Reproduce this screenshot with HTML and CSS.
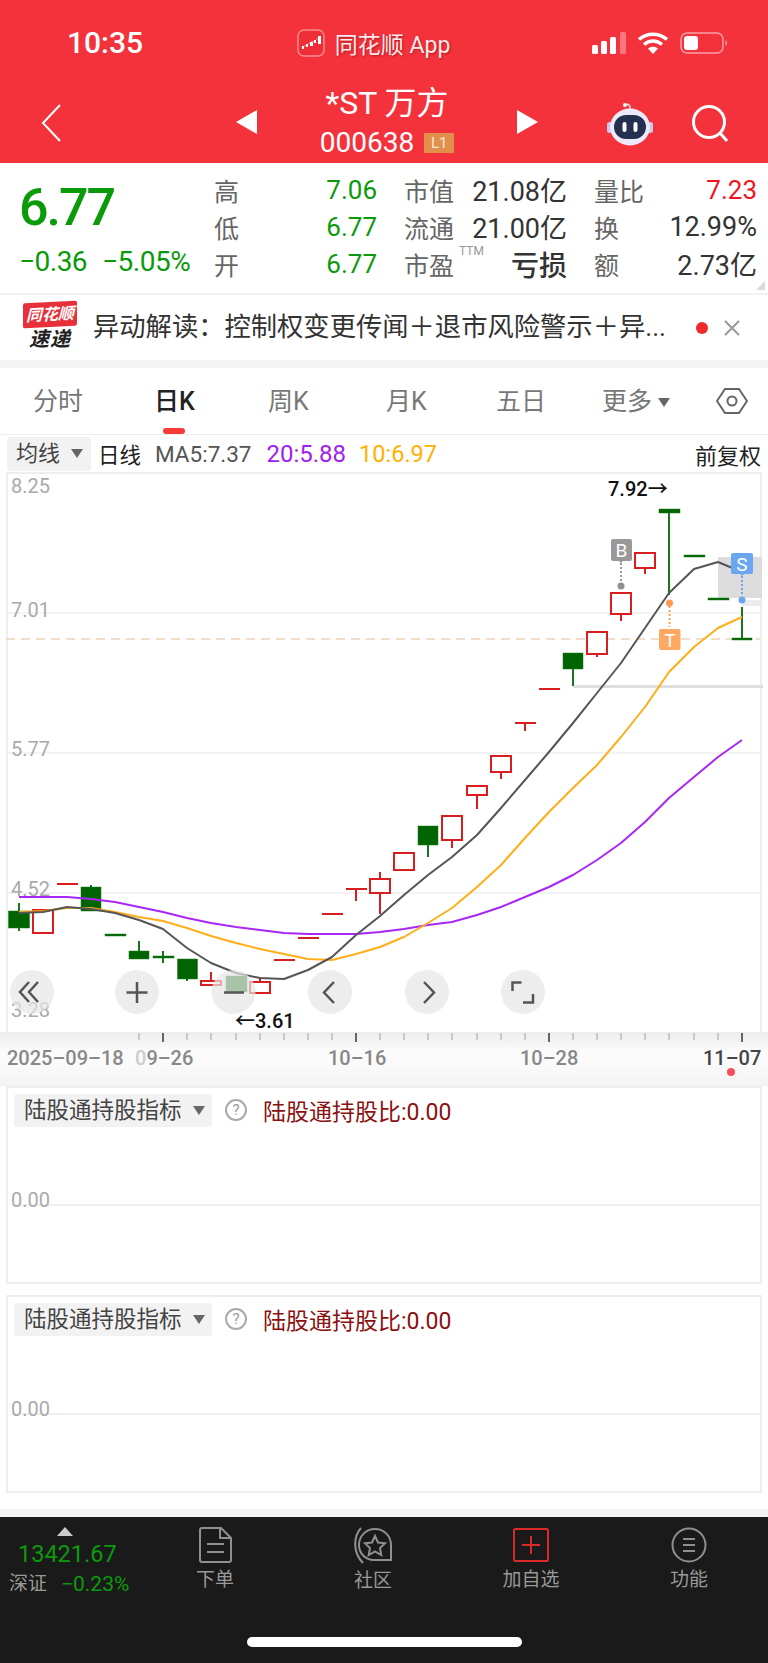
FILE: index.html
```html
<!DOCTYPE html>
<html lang="zh-CN">
<head>
    <meta charset="UTF-8">
    <meta name="viewport" content="width=device-width, initial-scale=1.0">
    <title>*ST万方</title>
    <link rel="stylesheet" href="styles.css">
</head>
<body>
<div id="page">
    <!-- 顶部红色区域 -->
    <header id="header">
        <div class="statusbar">
            <span class="time">10:35</span>
            <div class="app-name">
                <svg class="app-icon" width="28" height="28" viewBox="0 0 28 28">
                    <rect x="1" y="1" width="26" height="26" rx="6" fill="#ee2f38" stroke="#f98a8f" stroke-width="1.5"/>
                    <path d="M5 18l5-2 4-3 4-1 5-5" fill="none" stroke="#f98a8f" stroke-width="1"/>
                    <rect x="5" y="17" width="2" height="3" fill="#fff"/>
                    <rect x="9" y="15" width="2" height="3" fill="#fff"/>
                    <rect x="13" y="13" width="3" height="4" fill="#fff"/>
                    <rect x="17" y="11" width="2" height="3" fill="#fff"/>
                    <rect x="21" y="7" width="3" height="8" fill="#fff"/>
                </svg>
                <span>同花顺 App</span>
            </div>
            <div class="status-icons">
                <svg width="34" height="22" viewBox="0 0 34 22">
                    <rect x="0" y="13" width="6" height="9" rx="1.5" fill="#fff"/>
                    <rect x="9" y="9" width="6" height="13" rx="1.5" fill="#fff"/>
                    <rect x="18" y="5" width="6" height="17" rx="1.5" fill="#fff"/>
                    <rect x="28" y="0" width="6" height="22" rx="1.5" fill="#f9777e"/>
                </svg>
                <svg width="30" height="22" viewBox="0 0 30 22">
                    <path d="M1 7.5C9 .5 21 .5 29 7.5" fill="none" stroke="#fff" stroke-width="3.4"/>
                    <path d="M6 12.5c5.5-4.6 12.5-4.6 18 0" fill="none" stroke="#fff" stroke-width="3.4"/>
                    <path d="M10 16.5c3-2.5 7-2.5 10 0L15 22z" fill="#fff"/>
                </svg>
                <svg width="48" height="22" viewBox="0 0 48 22">
                    <rect x="1" y="1" width="42" height="20" rx="6" fill="none" stroke="#f9a0a5" stroke-width="1.5"/>
                    <rect x="4" y="4" width="14" height="14" rx="3" fill="#fff"/>
                    <path d="M45.5 8c2 .8 2 5.2 0 6z" fill="#f9a0a5"/>
                </svg>
            </div>
        </div>
        <div class="navbar">
            <svg class="nav-back" width="20" height="38" viewBox="0 0 20 38">
                <path d="M19 1L2 19l17 18" fill="none" stroke="#fff" stroke-width="2"/>
            </svg>
            <div class="arrow arrow-left"></div>
            <div class="stock">
                <div class="stock-name">*ST 万方</div>
                <div class="stock-code">000638<span class="badge">L1</span></div>
            </div>
            <div class="arrow arrow-right"></div>
            <svg class="robot" width="46" height="44" viewBox="0 0 46 44">
                <path d="M23 9V5c0-2-2-3-4-2.5" fill="none" stroke="#e6e6f5" stroke-width="1.5"/>
                <circle cx="18" cy="3" r="2" fill="#f2f0fa"/>
                <rect x="0" y="20" width="5" height="11" rx="2.5" fill="#cfc8ee"/>
                <rect x="41" y="20" width="5" height="11" rx="2.5" fill="#cfc8ee"/>
                <ellipse cx="23" cy="25" rx="20" ry="18.5" fill="#eceaf8"/>
                <rect x="7" y="13" width="32" height="24" rx="12" fill="#24304f"/>
                <rect x="15.5" y="20" width="4" height="10" rx="2" fill="#fff"/>
                <rect x="26.5" y="20" width="4" height="10" rx="2" fill="#fff"/>
            </svg>
            <svg class="search" width="38" height="38" viewBox="0 0 38 38">
                <circle cx="18" cy="17" r="15.5" fill="none" stroke="#fff" stroke-width="3"/>
                <path d="M29 28l7 8" stroke="#fff" stroke-width="3"/>
            </svg>
        </div>
    </header>

    <!-- 行情数据 -->
    <section id="quote">
        <div class="price-box">
            <div class="price">6.77</div>
            <div class="change"><span>−0.36</span><span>−5.05%</span></div>
        </div>
        <div class="quote-grid">
            <div class="cell"><span class="lab">高</span><span class="green">7.06</span></div>
            <div class="cell"><span class="lab">市值</span><span class="dark">21.08亿</span></div>
            <div class="cell"><span class="lab">量比</span><span class="red">7.23</span></div>
            <div class="cell"><span class="lab">低</span><span class="green">6.77</span></div>
            <div class="cell"><span class="lab">流通</span><span class="dark">21.00亿</span></div>
            <div class="cell"><span class="lab">换</span><span class="dark">12.99%</span></div>
            <div class="cell"><span class="lab">开</span><span class="green">6.77</span></div>
            <div class="cell"><span class="lab">市盈</span><sup class="ttm">TTM</sup><span class="dark loss">亏损</span></div>
            <div class="cell"><span class="lab">额</span><span class="dark">2.73亿</span></div>
        </div>
        <div class="corner"></div>
    </section>

    <!-- 速递 -->
    <section id="news">
        <div class="news-logo">
            <div class="news-logo-top">同花顺</div>
            <div class="news-logo-bottom">速递</div>
        </div>
        <div class="news-text">异动解读：控制权变更传闻＋退市风险警示＋异...</div>
        <div class="news-dot"></div>
        <svg class="news-close" width="16" height="16" viewBox="0 0 16 16">
            <path d="M1 1l14 14M15 1L1 15" stroke="#999" stroke-width="2"/>
        </svg>
    </section>

    <!-- 周期切换 -->
    <nav id="tabs">
        <div class="tab">分时</div>
        <div class="tab tab-on">日K</div>
        <div class="tab">周K</div>
        <div class="tab">月K</div>
        <div class="tab">五日</div>
        <div class="tab">更多<i class="caret"></i></div>
        <svg class="hex" width="32" height="26" viewBox="0 0 32 26">
            <path d="M9 1h14l8 12-8 12H9L1 13z" fill="none" stroke="#666" stroke-width="2"/>
            <circle cx="16" cy="13" r="4.5" fill="none" stroke="#666" stroke-width="2"/>
        </svg>
    </nav>

    <div id="toolbar">
        <div class="select">均线<i class="caret"></i></div>
        <span class="tb-day">日线</span>
        <span class="tb-ma5">MA5:7.37</span>
        <span class="tb-ma20">20:5.88</span>
        <span class="tb-ma10">10:6.97</span>
        <span class="tb-fq">前复权</span>
    </div>

    <!-- K线图 -->
    <div id="chart">
        <svg width="752" height="558" viewBox="8 474 752 558">
            <g class="grid">
                <path d="M6 613H762M6 753H762M6 893H762"/>
            </g>
            <path d="M6 639H760" stroke="#edd3b8" stroke-width="1.5" stroke-dasharray="9 6"/>
            <rect x="718" y="557" width="44" height="41" fill="#dcdcdc"/>
            <rect x="742" y="600" width="20" height="6" fill="#ececec"/>
            <rect x="573" y="685" width="190" height="3" fill="#dedede"/>

            <g class="axis-y">
                <text x="11" y="493">8.25</text>
                <text x="11" y="617">7.01</text>
                <text x="11" y="756">5.77</text>
                <text x="11" y="896">4.52</text>
                <text x="11" y="1017">3.28</text>
            </g>

            <g class="down">
                <path class="wick" d="M19 903V931M91 885V888M139 941V952M163 951V963M187 978V981M428 845V857M573 668V686M669 512V595M742 607V639"/>
                <rect x="8.5" y="911" width="21" height="17"/>
                <rect x="81" y="887" width="20" height="24"/>
                <rect x="129" y="951" width="20" height="8"/>
                <rect x="177.5" y="959" width="20" height="20"/>
                <rect x="418" y="826" width="20" height="19"/>
                <rect x="563" y="653" width="20" height="16"/>
                <rect x="105" y="934" width="21" height="2"/>
                <rect x="153" y="956" width="21" height="2"/>
                <rect x="226" y="976" width="21" height="16" opacity=".9"/>
                <rect x="659" y="509" width="21" height="4"/>
                <rect x="684" y="555" width="21" height="2"/>
                <rect x="708" y="598" width="21" height="2"/>
                <rect x="732" y="638" width="20" height="2"/>
            </g>

            <g class="up">
                <path class="wick" d="M211 972V981M260 977V982M356 889V901M380 872V879M380 893V914M452 840V848M477 795V809M501 772V779M525 723V731M597 654V657M621 614V621M645 568V574"/>
                <rect x="33" y="910" width="20" height="23"/>
                <rect x="201" y="981" width="20" height="4"/>
                <rect x="250" y="982" width="20" height="11"/>
                <rect x="370" y="879" width="20" height="14"/>
                <rect x="394" y="853" width="20" height="17"/>
                <rect x="442" y="816" width="20" height="24"/>
                <rect x="467" y="786" width="20" height="9"/>
                <rect x="491" y="756" width="20" height="16"/>
                <rect x="587" y="632" width="20" height="22"/>
                <rect x="611" y="593" width="20" height="21"/>
                <rect x="635" y="553" width="20" height="15"/>
                <path class="flat" d="M57 884H78M274 960H295M298 938H319M322 914H343M346 889H367M515 723H536M539 689H560"/>
            </g>

            <polyline class="ma20" points="19,897 43,897 67,897 91,899 115,902 139,907 163,912 187,918 211,923 236,927 260,930 284,933 308,934 332,934 356,934 380,932 404,929 428,925 452,922 477,915 501,907 525,897 549,887 573,875 597,860 621,843 645,822 669,798 694,777 718,757 742,740"/>
            <polyline class="ma10" points="19,912 43,911 67,908 91,908 115,912 139,917 163,921 187,928 211,936 236,943 260,949 284,954 308,959 332,960 356,954 380,947 404,937 428,923 452,908 477,887 501,865 525,838 549,812 573,788 597,765 621,737 645,707 669,672 694,647 718,628 742,617"/>
            <polyline class="ma5" points="19,913 43,912 67,907 91,909 115,913 139,920 163,929 187,948 211,963 236,973 260,978 284,979 308,970 332,957 356,935 380,916 404,895 428,875 452,857 477,835 501,808 525,780 549,752 573,723 597,693 621,663 645,628 669,593 694,569 718,562 742,572"/>

            <!-- 买卖点 -->
            <path d="M621 563V582" stroke="#999" stroke-width="2" stroke-dasharray="2 2"/>
            <circle cx="621" cy="586" r="3.5" fill="#8f8f8f"/>
            <rect x="611" y="539" width="21" height="22" rx="2" fill="#999"/>
            <path d="M618 560h6l-3 3z" fill="#999"/>
            <text class="mark" x="621.5" y="557">B</text>

            <path d="M669.5 606V627" stroke="#ffa15c" stroke-width="2" stroke-dasharray="2 2"/>
            <circle cx="669.5" cy="603" r="3.5" fill="#ff9a50"/>
            <rect x="659" y="629" width="21.5" height="21" rx="2" fill="#ffa862"/>
            <text class="mark" x="669.8" y="647">T</text>

            <path d="M742 576V596" stroke="#6aa5ee" stroke-width="2" stroke-dasharray="2 2"/>
            <circle cx="742" cy="600" r="3.5" fill="#6aa5ee"/>
            <rect x="731" y="553" width="22" height="21" rx="2" fill="#6ba6f0"/>
            <path d="M739 573h6l-3 3z" fill="#6ba6f0"/>
            <text class="mark" x="742" y="571">S</text>

            <text class="peak" x="608" y="496">7.92→</text>
            <text class="peak" x="235" y="1028">←3.61</text>

            <!-- 图上按钮 -->
            <g class="btn-bg">
                <circle cx="32" cy="992" r="22"/>
                <circle cx="137" cy="992" r="22"/>
                <circle cx="233.5" cy="992" r="22"/>
                <circle cx="330" cy="992" r="22"/>
                <circle cx="427" cy="992" r="22"/>
                <circle cx="523" cy="992" r="22"/>
            </g>
            <g class="btn-icon">
                <path d="M29 982l-9 10 9 10M38 982l-9 10 9 10"/>
                <path d="M137 982V1003M126.5 992.5H147.5"/>
                <path d="M224 992.5H244"/>
                <path d="M334 982l-10 10.5 10 10.5"/>
                <path d="M424 982l10 10.5-10 10.5"/>
                <path d="M512.5 991v-8.500h9M533 994v8.500h-10"/>
            </g>
        </svg>
    </div>

    <!-- 日期轴 -->
    <div id="axis">
        <svg width="768" height="10" viewBox="0 1032 768 10">
            <path class="tick" d="M139 1033V1040M187 1033V1040M211 1033V1040M236 1033V1040M260 1033V1040M284 1033V1040M308 1033V1040M332 1033V1040M380 1033V1040M404 1033V1040M428 1033V1040M452 1033V1040M477 1033V1040M501 1033V1040M525 1033V1040M573 1033V1040M597 1033V1040M621 1033V1040M645 1033V1040M669 1033V1040M694 1033V1040M718 1033V1040"/>
            <path class="tick-big" d="M163 1033V1042M356 1033V1042M549 1033V1042M742 1033V1042"/>
        </svg>
        <div class="dates">
            <span class="d1">2025–09–18</span>
            <span class="d2"><i>0</i>9–26</span>
            <span class="d3">10–16</span>
            <span class="d4">10–28</span>
            <span class="d5">11–07</span>
        </div>
        <div class="axis-dot"></div>
    </div>

    <!-- 副图 -->
    <div class="panel">
        <div class="panel-head">
            <div class="select select-wide">陆股通持股指标<i class="caret"></i></div>
            <div class="help">?</div>
            <span class="panel-val">陆股通持股比:0.00</span>
        </div>
        <div class="panel-zero">0.00</div>
    </div>
    <div class="panel panel-2">
        <div class="panel-head">
            <div class="select select-wide">陆股通持股指标<i class="caret"></i></div>
            <div class="help">?</div>
            <span class="panel-val">陆股通持股比:0.00</span>
        </div>
        <div class="panel-zero">0.00</div>
    </div>
    <div class="page-end"></div>

    <!-- 底部工具栏 -->
    <footer id="footer">
        <div class="foot-row">
            <div class="index">
                <i class="index-up"></i>
                <div class="index-val">13421.67</div>
                <div class="index-sub"><span>深证</span><b>−0.23%</b></div>
            </div>
            <div class="foot-item">
                <svg width="33" height="36" viewBox="0 0 33 36">
                    <path d="M1 3a2 2 0 0 1 2-2h19l10 10v22a2 2 0 0 1-2 2H3a2 2 0 0 1-2-2z" fill="none" stroke="#8f8f8f" stroke-width="2"/>
                    <path d="M21 1v10h11M8 17h17M8 25h17" fill="none" stroke="#8f8f8f" stroke-width="2"/>
                </svg>
                <span>下单</span>
            </div>
            <div class="foot-item">
                <svg width="38" height="37" viewBox="0 0 38 37">
                    <path d="M7 1C-1 10-1 26 9 36" fill="none" stroke="#8f8f8f" stroke-width="2"/>
                    <path d="M21 2c9 0 16 7 16 16v15H20C11 33 5 26 5 18 5 9 12 2 21 2z" fill="none" stroke="#8f8f8f" stroke-width="2"/>
                    <path d="M21 9l3 6.500 7 .8-5 4.700 1.300 7-6.300-3.500-6.300 3.500 1.300-7-5-4.700 7-.8z" fill="none" stroke="#8f8f8f" stroke-width="2"/>
                </svg>
                <span>社区</span>
            </div>
            <div class="foot-item">
                <svg width="36" height="36" viewBox="0 0 36 36">
                    <rect x="1" y="2" width="34" height="32" rx="1.5" fill="none" stroke="#d92a2a" stroke-width="2"/>
                    <path d="M18 9V27M9 18H27" stroke="#d92a2a" stroke-width="2"/>
                </svg>
                <span>加自选</span>
            </div>
            <div class="foot-item">
                <svg width="36" height="36" viewBox="0 0 36 36">
                    <circle cx="18" cy="18" r="16.5" fill="none" stroke="#8f8f8f" stroke-width="2"/>
                    <path d="M12 12H24M12 18H24M12 24H24" stroke="#8f8f8f" stroke-width="2"/>
                </svg>
                <span>功能</span>
            </div>
        </div>
        <div class="home-bar"></div>
    </footer>
</div>
</body>
</html>
```

FILE: styles.css
```css
* {
    box-sizing: border-box;
}
body {
    margin: 0;
    background-color: #ffffff;
    font-family: Roboto, "Noto Sans CJK SC", sans-serif;
    color: #333;
}
#page {
    width: 768px;
    height: 1663px;
    overflow: hidden;
}
i {
    font-style: normal;
}

/* 顶部 */
#header {
    height: 163px;
    background-color: #f3323c;
    color: #fff;
}
.statusbar {
    height: 85px;
    display: flex;
    justify-content: space-between;
    align-items: center;
    padding: 0 40px 0 67px;
}
.time {
    font-size: 30px;
    font-weight: 500;
}
.app-name {
    display: flex;
    align-items: center;
    gap: 10px;
    font-size: 23px;
    color: #fdeced;
    text-shadow: 1px 1px 2px rgba(120, 0, 0, 0.5);
    margin-left: 12px;
}
.status-icons {
    display: flex;
    align-items: center;
    gap: 12px;
}
.navbar {
    height: 78px;
    display: flex;
    align-items: center;
    padding-left: 41px;
}
.nav-back {
    margin-bottom: 3px;
}
.arrow {
    width: 0;
    height: 0;
    border-top: 12px solid transparent;
    border-bottom: 12px solid transparent;
    margin-bottom: 4px;
}
.arrow-left {
    border-right: 21px solid #fff;
    margin-left: 175px;
}
.arrow-right {
    border-left: 21px solid #fff;
}
.stock {
    width: 260px;
    align-self: flex-start;
    text-align: center;
}
.stock-name {
    font-size: 32px;
    line-height: 36px;
}
.stock-code {
    font-size: 28px;
    line-height: 30px;
    margin-top: 7px;
    display: flex;
    justify-content: center;
    align-items: center;
    gap: 10px;
}
.badge {
    width: 30px;
    height: 20px;
    background-color: #e0904a;
    color: #fbe9d8;
    font-size: 15px;
    line-height: 20px;
}
.robot {
    margin-left: 69px;
}
.search {
    margin-left: 38px;
    margin-bottom: 1px;
}

/* 行情 */
#quote {
    height: 132px;
    position: relative;
    display: flex;
    border-bottom: 2px solid #f2f2f2;
}
.price-box {
    width: 214px;
    padding-left: 19px;
}
.price {
    font-size: 52px;
    font-weight: 500;
    letter-spacing: -2px;
    line-height: 60px;
    margin-top: 15px;
    color: #0a9a0a;
}
.change {
    display: flex;
    gap: 15px;
    font-size: 28px;
    line-height: 30px;
    margin-top: 9px;
    color: #0a9a0a;
    letter-spacing: -0.5px;
}
.quote-grid {
    width: 543px;
    display: grid;
    grid-template-columns: repeat(3, 163px);
    grid-auto-rows: 37px;
    column-gap: 27px;
    padding-top: 8px;
}
.cell {
    position: relative;
    display: flex;
    justify-content: space-between;
    align-items: center;
    font-size: 26px;
}
.lab {
    font-size: 25px;
    color: #666;
}
.green {
    color: #0a9a0a;
}
.red {
    color: #f0141e;
}
.dark {
    color: #333;
    font-size: 27px;
}
.loss {
    font-size: 28px;
    font-weight: 500;
}
.ttm {
    position: absolute;
    left: 55px;
    top: 0;
    font-size: 12px;
    line-height: 12px;
    color: #999;
}
.corner {
    position: absolute;
    right: 3px;
    bottom: 3px;
    width: 0;
    height: 0;
    border-left: 9px solid transparent;
    border-bottom: 9px solid #d9d9d9;
}

/* 速递 */
#news {
    height: 65px;
    display: flex;
    align-items: center;
    padding-left: 23px;
}
.news-logo {
    width: 54px;
    margin-bottom: 2px;
    text-align: center;
    font-style: italic;
    font-weight: 700;
}
.news-logo-top {
    height: 25px;
    background-color: #e8303a;
    color: #fff;
    font-size: 16px;
    line-height: 25px;
    border-radius: 2px;
    transform: skewY(-3deg);
}
.news-logo-bottom {
    font-size: 20px;
    line-height: 24px;
    color: #222;
    letter-spacing: 1px;
}
.news-text {
    width: 590px;
    margin-left: 16px;
    margin-bottom: 6px;
    font-size: 26.3px;
    color: #333;
    white-space: nowrap;
    overflow: hidden;
}
.news-dot {
    width: 12px;
    height: 12px;
    margin-left: 13px;
    border-radius: 50%;
    background-color: #ee2a2a;
}
.news-close {
    margin-left: 16px;
}

/* 周期切换 */
#tabs {
    height: 75px;
    position: relative;
    border-top: 8px solid #f3f3f3;
    border-bottom: 1px solid #eeeeee;
    font-size: 25px;
    color: #777;
}
.tab {
    position: absolute;
    top: 16px;
    line-height: 36px;
    white-space: nowrap;
}
.tab:nth-child(1) { left: 33px; }
.tab:nth-child(2) { left: 154px; }
.tab:nth-child(3) { left: 268px; }
.tab:nth-child(4) { left: 386px; }
.tab:nth-child(5) { left: 496px; }
.tab:nth-child(6) { left: 602px; }
.tab-on {
    color: #222;
    font-weight: 500;
}
.tab-on::after {
    content: "";
    position: absolute;
    left: 9px;
    top: 44px;
    width: 22px;
    height: 6px;
    border-radius: 3px;
    background-color: #f83a3a;
}
.hex {
    position: absolute;
    left: 716px;
    top: 20px;
}
.caret {
    display: inline-block;
    width: 0;
    height: 0;
    border-left: 6px solid transparent;
    border-right: 6px solid transparent;
    border-top: 9px solid #666;
    margin-left: 6px;
    vertical-align: 3px;
}

/* 工具条 */
#toolbar {
    height: 37px;
    display: flex;
    align-items: center;
    padding-left: 7px;
    font-size: 21.5px;
    white-space: nowrap;
}
.select {
    width: 84px;
    height: 34px;
    padding-left: 9px;
    background-color: #f2f2f2;
    border-radius: 3px;
    font-size: 22px;
    line-height: 34px;
    color: #444;
}
.select .caret {
    margin-left: 11px;
}
.tb-day {
    margin-left: 7px;
    color: #222;
}
.tb-ma5 {
    margin-left: 14px;
    font-size: 22.5px;
    color: #555;
}
.tb-ma20 {
    margin-left: 15px;
    font-size: 24px;
    color: #a020f0;
}
.tb-ma10 {
    margin-left: 13px;
    font-size: 23.5px;
    color: #ffb000;
}
.tb-fq {
    margin-left: auto;
    margin-right: 7px;
    font-size: 22px;
    color: #222;
}

/* K线 */
#chart {
    width: 756px;
    height: 560px;
    margin-left: 6px;
    border: 2px solid #eeeeee;
    border-bottom: 0;
}
#chart svg {
    display: block;
    overflow: visible;
}
.grid path {
    stroke: #f0f0f0;
    stroke-width: 1.5;
    fill: none;
}
.axis-y text {
    font-size: 20px;
    fill: #aaa;
}
.down rect {
    fill: #006400;
    stroke: #1e7a1e;
    stroke-width: 0.5;
}
.down .wick {
    stroke: #17761e;
    stroke-width: 2;
    fill: none;
}
.up rect {
    fill: #fff;
    stroke: #d81e1e;
    stroke-width: 2;
}
.up .wick,
.up .flat {
    stroke: #d81e1e;
    stroke-width: 2;
    fill: none;
}
.ma5,
.ma10,
.ma20 {
    fill: none;
    stroke-width: 2;
    stroke-linejoin: round;
}
.ma5 {
    stroke: #555;
}
.ma10 {
    stroke: #ffae1a;
}
.ma20 {
    stroke: #a827f5;
}
.mark {
    font-size: 19px;
    fill: #fff;
    text-anchor: middle;
}
.peak {
    font-size: 20px;
    font-weight: 500;
    fill: #111;
}
.btn-bg circle {
    fill: #e6e6e6;
    opacity: 0.7;
}
.btn-icon path {
    fill: none;
    stroke: #555;
    stroke-width: 2.5;
}

/* 日期轴 */
#axis {
    height: 54px;
    position: relative;
    background: linear-gradient(180deg, #ececec 0, #fbfbfb 35%, #fafafa 60%, #f3f3f3 100%);
    overflow: hidden;
}
#axis svg {
    display: block;
}
.tick {
    stroke: #bbb;
    stroke-width: 1.5;
}
.tick-big {
    stroke: #666;
    stroke-width: 2;
}
.dates {
    font-size: 20px;
    font-weight: 500;
    color: #888;
}
.dates span {
    position: absolute;
    top: 13px;
    line-height: 26px;
    white-space: nowrap;
}
.d1 { left: 7px; }
.d2 { left: 135px; }
.d2 i { opacity: 0.4; }
.d3 { left: 328px; }
.d4 { left: 520px; }
.d5 {
    left: 703px;
    color: #444;
}
.axis-dot {
    position: absolute;
    left: 727px;
    top: 36px;
    width: 8px;
    height: 8px;
    border-radius: 50%;
    background-color: #f5505a;
}

/* 副图 */
.panel {
    width: 756px;
    height: 198px;
    margin-left: 6px;
    position: relative;
    border: 2px solid #eeeeee;
}
.panel-2 {
    margin-top: 11px;
}
.panel-head {
    display: flex;
    align-items: center;
    padding: 5px 0 0 6px;
}
.select-wide {
    width: 198px;
    height: 33px;
    padding-left: 10px;
    font-size: 22.5px;
    line-height: 33px;
}
.help {
    width: 22px;
    height: 22px;
    margin-left: 13px;
    border: 2px solid #aaa;
    border-radius: 50%;
    color: #999;
    font-size: 15px;
    line-height: 18px;
    text-align: center;
}
.panel-val {
    margin-left: 16px;
    font-size: 23px;
    color: #8b1010;
}
.panel-zero {
    position: absolute;
    left: 3px;
    right: 0;
    top: 100px;
    height: 18px;
    font-size: 20px;
    line-height: 24px;
    color: #aaa;
    border-bottom: 2px solid #f0f0f0;
}
.page-end {
    height: 24px;
    border-bottom: 8px solid #f3f3f3;
}

/* 底部 */
#footer {
    height: 146px;
    position: relative;
    background-color: #1a1a1a;
    color: #999;
}
.foot-row {
    display: flex;
    padding-top: 10px;
}
.index {
    width: 136px;
    position: relative;
    padding-left: 9px;
}
.index-up {
    position: absolute;
    left: 57px;
    top: 0;
    width: 0;
    height: 0;
    border-left: 8.5px solid transparent;
    border-right: 8.5px solid transparent;
    border-bottom: 9px solid #ccc;
}
.index-val {
    padding: 13px 0 0 9px;
    font-size: 23.5px;
    line-height: 28px;
    color: #0a9a0a;
}
.index-sub {
    display: flex;
    align-items: center;
    gap: 14px;
    font-size: 19px;
    line-height: 28px;
    margin-top: 2px;
}
.index-sub b {
    font-weight: 400;
    font-size: 21px;
    color: #0a9a0a;
}
.foot-item {
    width: 158px;
    display: flex;
    flex-direction: column;
    align-items: center;
    gap: 4px;
    font-size: 19px;
    line-height: 26px;
}
.home-bar {
    position: absolute;
    left: 247px;
    top: 120px;
    width: 275px;
    height: 10px;
    border-radius: 5px;
    background-color: #fff;
}
```
